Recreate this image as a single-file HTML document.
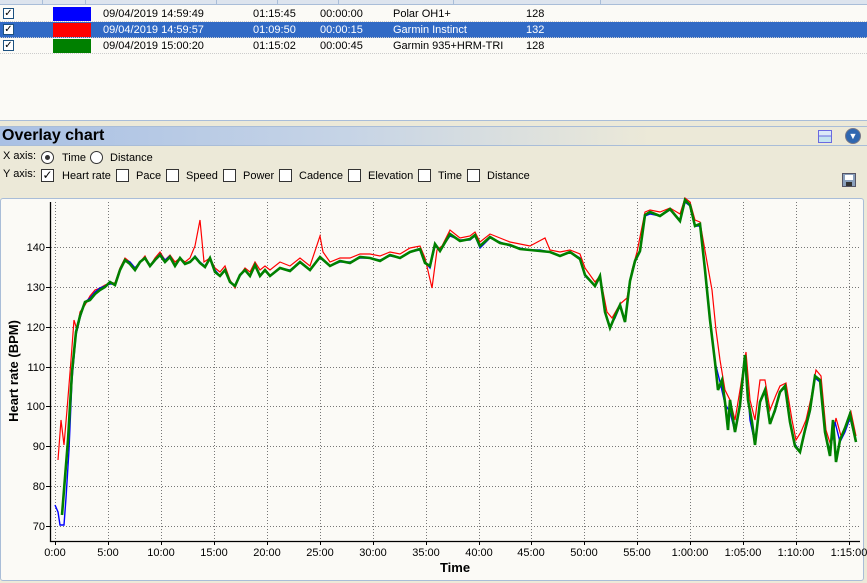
<!DOCTYPE html>
<html><head><meta charset="utf-8"><style>
*{margin:0;padding:0;box-sizing:border-box}
body{width:867px;height:583px;background:#ece9d8;font-family:"Liberation Sans",sans-serif;font-size:11px;color:#000;position:relative;overflow:hidden}
.abs{position:absolute}
.list{left:0;top:0;width:867px;height:121px;background:#fbfaf6;border-bottom:1px solid #a9bdd8}
.hdr{left:0;top:0;width:867px;height:5px;background:#dde4ee;border-bottom:1px solid #a9bdd8}
.row{left:0;width:867px;height:16px;border-bottom:1px dotted #ccc}
.row span{position:absolute;top:2px;white-space:nowrap}
.cb{position:absolute;width:11px;height:11px;border:1px solid #1c5180;background:#fff;font-size:10px;line-height:9px;text-align:center}
.sw{position:absolute;left:53px;top:1px;width:38px;height:14px}
.ov{left:0;top:126px;width:867px;height:20px;background:linear-gradient(90deg,#a9c0e4 0%,#c6d4e6 40%,#ece9d8 75%);border-top:1px solid #a9bdd8;border-bottom:1px solid #a9bdd8}
.ov b{position:absolute;left:2px;top:0px;font-size:16px}
.opt{position:absolute;white-space:nowrap;font-size:11px}
.rad{position:absolute;width:13px;height:13px;border-radius:50%;border:1px solid #333;background:#fff}
.chart{left:0;top:198px;width:864px;height:383px;background:#fbfaf6;border:1px solid #a9bdd8;border-radius:3px}
</style></head><body>
<div class="abs list"></div>
<div class="abs hdr"></div>
<div class="abs" style="left:42px;top:0;width:1px;height:5px;background:#a9bdd8"></div>
<div class="abs" style="left:85px;top:0;width:1px;height:5px;background:#a9bdd8"></div>
<div class="abs" style="left:216px;top:0;width:1px;height:5px;background:#a9bdd8"></div>
<div class="abs" style="left:277px;top:0;width:1px;height:5px;background:#a9bdd8"></div>
<div class="abs" style="left:338px;top:0;width:1px;height:5px;background:#a9bdd8"></div>
<div class="abs" style="left:453px;top:0;width:1px;height:5px;background:#a9bdd8"></div>
<div class="abs" style="left:600px;top:0;width:1px;height:5px;background:#a9bdd8"></div>

<div class="abs row" style="top:6px"><div class="cb" style="left:3px;top:2px">✓</div><div class="sw" style="background:#00f"></div><span style="left:103px">09/04/2019 14:59:49</span><span style="left:253px">01:15:45</span><span style="left:320px">00:00:00</span><span style="left:393px">Polar OH1+</span><span style="left:526px">128</span></div>
<div class="abs row" style="top:22px;background:#316ac5;color:#fff"><div class="cb" style="left:3px;top:2px;color:#000">✓</div><div class="sw" style="background:#f00"></div><span style="left:103px">09/04/2019 14:59:57</span><span style="left:253px">01:09:50</span><span style="left:320px">00:00:15</span><span style="left:393px">Garmin Instinct</span><span style="left:526px">132</span></div>
<div class="abs row" style="top:38px"><div class="cb" style="left:3px;top:2px">✓</div><div class="sw" style="background:#008000"></div><span style="left:103px">09/04/2019 15:00:20</span><span style="left:253px">01:15:02</span><span style="left:320px">00:00:45</span><span style="left:393px">Garmin 935+HRM-TRI</span><span style="left:526px">128</span></div>

<div class="abs ov"><b>Overlay chart</b>
<div class="abs" style="left:818px;top:3px;width:14px;height:13px;border:1px solid #6a6ae0;background:linear-gradient(#dbe9f8 0 40%,#6a6ae0 40% 50%,#c4e4f0 50%)"></div>
<div class="abs" style="left:845px;top:1px;width:16px;height:16px;border-radius:50%;background:#2f67b0;border:1px solid #778;color:#fff;font-size:9px;line-height:15px;text-align:center">▼</div>
</div>
<span class="opt" style="left:3px;top:150px">X axis:</span>
<div class="rad" style="left:41px;top:151px"><div style="position:absolute;left:3px;top:3px;width:5px;height:5px;border-radius:50%;background:#333"></div></div>
<span class="opt" style="left:62px;top:152px">Time</span>
<div class="rad" style="left:90px;top:151px"></div>
<span class="opt" style="left:110px;top:152px">Distance</span>
<span class="opt" style="left:3px;top:168px">Y axis:</span>
<div class="cb" style="left:41px;top:169px;width:13px;height:13px;border-color:#333;font-size:12px;line-height:11px">✓</div><span class="opt" style="left:62px;top:170px">Heart rate</span>
<div class="cb" style="left:116px;top:169px;width:13px;height:13px;border-color:#333"></div><span class="opt" style="left:136px;top:170px">Pace</span>
<div class="cb" style="left:166px;top:169px;width:13px;height:13px;border-color:#333"></div><span class="opt" style="left:186px;top:170px">Speed</span>
<div class="cb" style="left:223px;top:169px;width:13px;height:13px;border-color:#333"></div><span class="opt" style="left:243px;top:170px">Power</span>
<div class="cb" style="left:279px;top:169px;width:13px;height:13px;border-color:#333"></div><span class="opt" style="left:299px;top:170px">Cadence</span>
<div class="cb" style="left:348px;top:169px;width:13px;height:13px;border-color:#333"></div><span class="opt" style="left:368px;top:170px">Elevation</span>
<div class="cb" style="left:418px;top:169px;width:13px;height:13px;border-color:#333"></div><span class="opt" style="left:438px;top:170px">Time</span>
<div class="cb" style="left:467px;top:169px;width:13px;height:13px;border-color:#333"></div><span class="opt" style="left:487px;top:170px">Distance</span>
<div class="abs" style="left:842px;top:173px;width:14px;height:14px;background:#8aa0bc;border:1px solid #556"><div style="position:absolute;left:2px;top:1px;width:8px;height:5px;background:#fff"></div><div style="position:absolute;left:3px;top:8px;width:6px;height:4px;background:#333"></div></div>

<div class="abs chart"></div>
<svg class="abs" style="left:0;top:0" width="867" height="583" font-family="Liberation Sans, sans-serif">
<g stroke="#777" stroke-width="1" stroke-dasharray="1,2" fill="none">
<path d="M55.5 202V541M108.5 202V541M161.5 202V541M214.5 202V541M267.5 202V541M320.5 202V541M373.5 202V541M426.5 202V541M479.5 202V541M531.5 202V541M584.5 202V541M637.5 202V541M690.5 202V541M743.5 202V541M796.5 202V541M849.5 202V541"/>
<path d="M51 247.5H860M51 287.5H860M51 327.5H860M51 367.5H860M51 406.5H860M51 446.5H860M51 486.5H860M51 526.5H860"/>
</g>
<path d="M50.5 202V541.5H860" stroke="#000" stroke-width="1.3" fill="none"/>
<g stroke="#000"><path d="M46 247.5h4M46 287.5h4M46 327.5h4M46 367.5h4M46 406.5h4M46 446.5h4M46 486.5h4M46 526.5h4M55.5 541v4M108.5 541v4M161.5 541v4M214.5 541v4M267.5 541v4M320.5 541v4M373.5 541v4M426.5 541v4M479.5 541v4M531.5 541v4M584.5 541v4M637.5 541v4M690.5 541v4M743.5 541v4M796.5 541v4M849.5 541v4"/></g>
<g font-size="11" text-anchor="end" fill="#000">
<text x="45" y="251">140</text><text x="45" y="291">130</text><text x="45" y="331">120</text><text x="45" y="371">110</text><text x="45" y="410">100</text><text x="45" y="450">90</text><text x="45" y="490">80</text><text x="45" y="530">70</text></g>
<g font-size="11" text-anchor="middle" fill="#000">
<text x="55" y="556">0:00</text><text x="108" y="556">5:00</text><text x="161" y="556">10:00</text><text x="214" y="556">15:00</text><text x="267" y="556">20:00</text><text x="320" y="556">25:00</text><text x="373" y="556">30:00</text><text x="426" y="556">35:00</text><text x="479" y="556">40:00</text><text x="531" y="556">45:00</text><text x="584" y="556">50:00</text><text x="637" y="556">55:00</text><text x="690" y="556">1:00:00</text><text x="743" y="556">1:05:00</text><text x="796" y="556">1:10:00</text><text x="849" y="556">1:15:00</text></g>
<text x="455" y="572" font-size="13" font-weight="bold" text-anchor="middle">Time</text>
<text transform="translate(18 371) rotate(-90)" font-size="13" font-weight="bold" text-anchor="middle">Heart rate (BPM)</text>
<polyline fill="none" stroke="#f00" stroke-width="1.2" points="58,460 61,420 64,445 67,410 71,360 74,320 77,330 80,312 85,305 90,296 95,290 100,288 105,285 110,283 115,283 120,268 125,258 130,262 135,268 140,262 145,256 150,266 155,258 160,252 165,260 170,255 175,262 180,258 185,262 190,258 195,246 200,220 204,262 210,258 215,268 220,272 225,266 230,280 235,288 240,275 245,268 250,272 255,262 260,270 265,266 270,270 280,262 290,266 300,258 310,266 320,236 323,252 330,262 340,258 350,258 360,254 370,254 380,256 390,252 400,254 410,248 420,246 425,258 432,288 437,250 442,246 450,230 460,238 470,236 475,232 480,242 490,234 500,238 510,242 520,244 530,246 545,238 550,250 560,252 570,250 580,254 585,268 595,282 600,276 607,312 612,318 620,304 627,298 632,270 637,252 645,212 650,210 660,212 670,208 680,214 685,198 690,202 695,220 700,222 707,262 712,290 716,330 720,360 725,390 730,400 735,420 740,390 746,352 750,400 755,420 760,380 765,380 770,410 776,395 780,386 786,383 792,420 796,440 801,432 806,420 811,398 816,370 821,376 826,430 831,446 836,418 841,436 846,426 851,412 856,436"/>
<polyline fill="none" stroke="#00f" stroke-width="1.4" points="55,505 58,512 60,525 64,525 66,498 69,450 72,380 76,335 80,318 85,302 90,298 95,292 100,288 105,286 110,284 115,284 120,270 125,260 130,262 135,268 140,262 145,258 150,266 155,260 160,254 165,260 170,256 175,265 180,258 185,264 190,262 195,256 200,262 205,266 210,258 215,270 220,276 225,270 230,282 235,286 240,276 245,270 250,276 255,266 260,276 265,270 270,276 280,268 290,270 300,262 310,270 320,258 330,266 340,262 350,262 360,258 370,258 380,260 390,256 400,258 410,252 420,250 425,262 430,268 435,246 440,250 450,236 460,240 470,240 475,236 480,248 490,238 500,242 510,246 520,248 530,250 540,250 550,252 560,256 570,252 580,258 585,276 595,286 600,278 605,312 610,326 615,318 620,306 625,322 630,282 635,262 640,252 645,216 650,214 660,216 670,210 680,220 685,202 690,206 695,226 700,226 705,272 710,322 715,362 720,382 725,404 730,412 735,432 740,404 745,356 750,420 755,444 760,402 765,392 770,422 775,412 780,392 785,388 790,422 795,444 800,452 805,432 810,412 815,378 820,382 825,432 830,452 835,422 840,442 845,432 850,418 856,442"/>
<polyline fill="none" stroke="#008000" stroke-width="2.6" points="62,515 64,490 68,440 72,372 76,332 80,316 85,302 90,300 95,294 100,290 105,287 110,282 115,285 120,270 125,260 130,264 135,270 140,262 145,258 150,266 155,260 160,255 165,262 170,257 175,266 180,258 185,264 190,262 195,257 200,263 205,267 210,258 215,272 220,276 225,270 230,282 235,286 240,275 245,270 250,276 255,265 260,276 265,270 270,276 280,268 290,271 300,262 310,270 320,257 330,266 340,261 350,263 360,257 370,258 380,261 390,255 400,258 410,252 420,249 425,263 430,266 435,244 440,251 450,234 460,241 470,239 475,235 480,246 490,237 500,243 510,245 520,249 530,250 540,251 550,252 560,256 570,252 580,259 585,275 595,286 600,276 605,312 610,328 615,316 620,305 625,322 630,281 635,261 640,251 645,215 650,212 660,216 670,209 680,221 685,200 690,205 695,226 700,224 705,270 710,320 715,362 718,390 722,380 725,402 728,430 730,400 735,432 740,405 745,355 748,400 752,422 755,445 760,402 765,390 770,424 775,410 780,392 785,386 790,422 795,446 800,452 805,430 810,410 815,376 820,380 825,432 830,456 833,420 836,462 840,440 845,428 850,414 856,442"/>
</svg>
</body></html>
